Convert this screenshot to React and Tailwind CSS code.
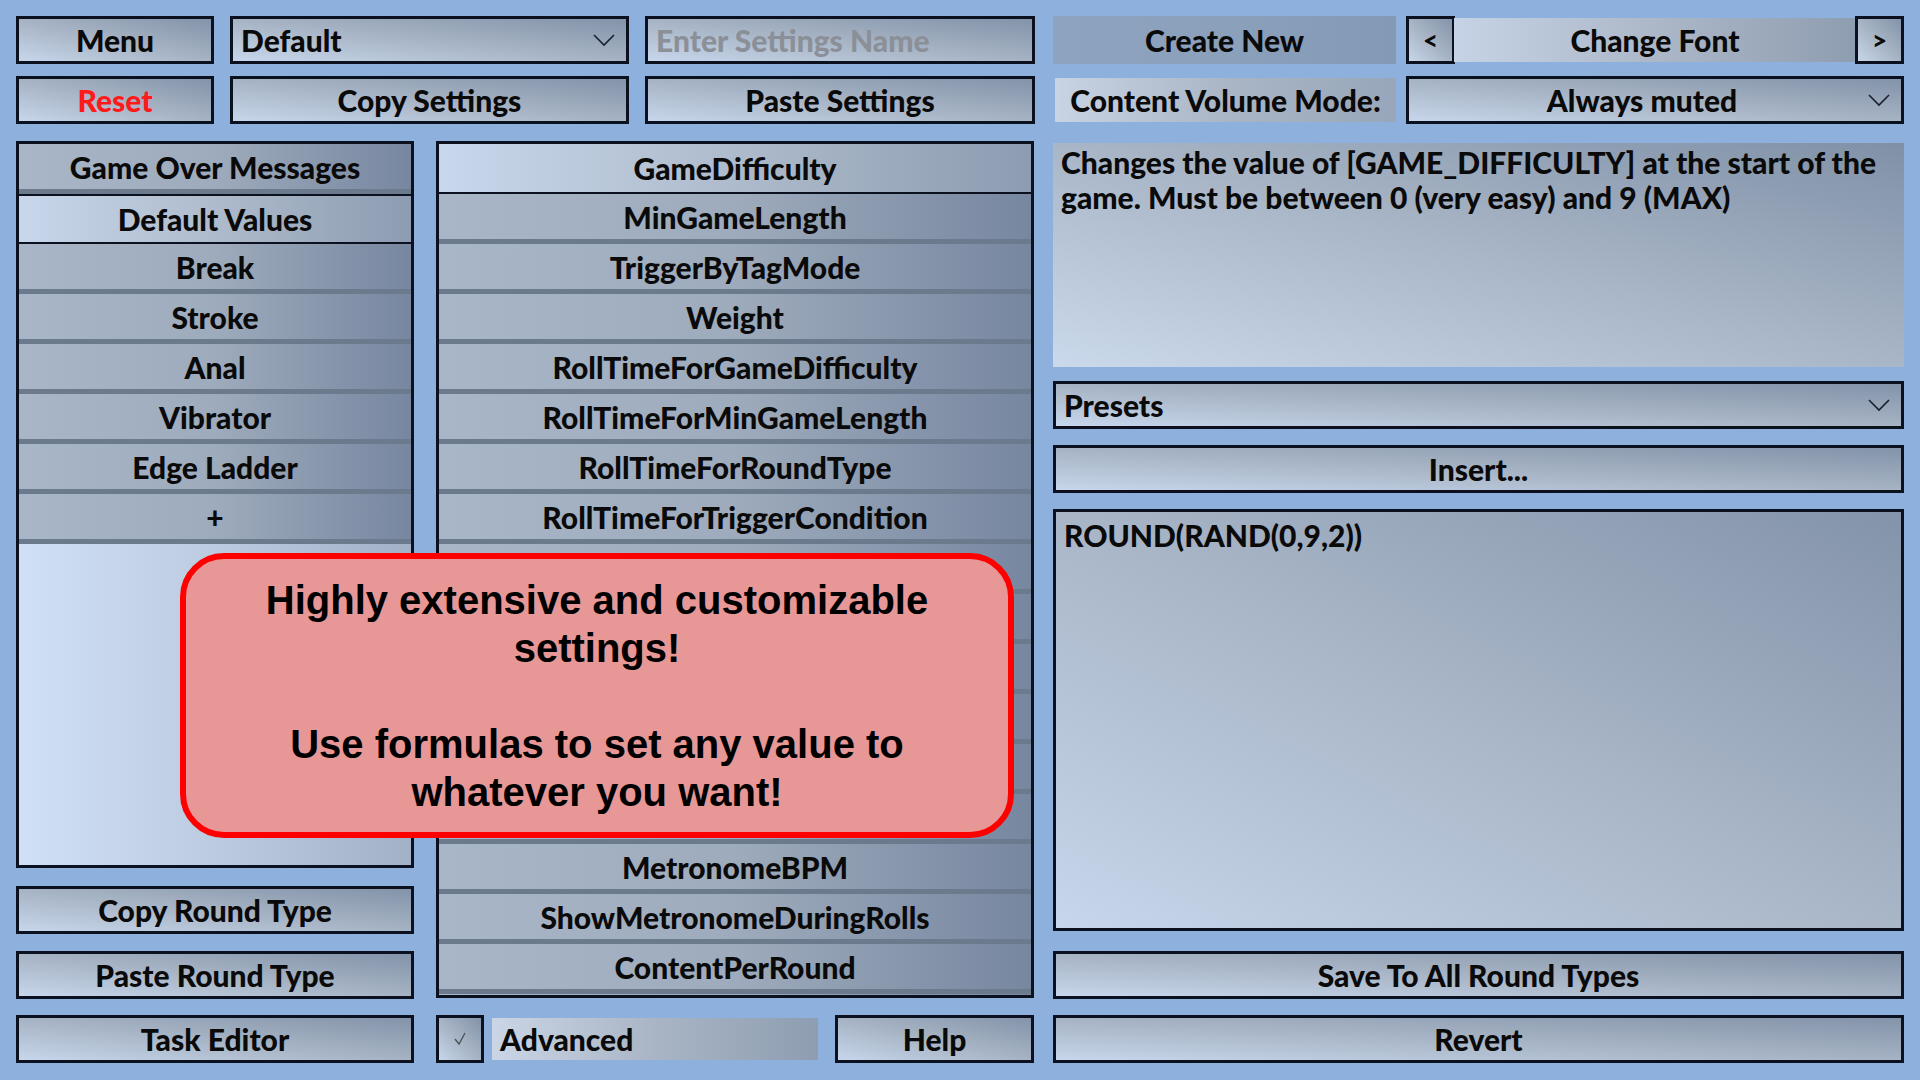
import React from 'react';

const roundTypes = ['Game Over Messages', 'Default Values', 'Break', 'Stroke', 'Anal', 'Vibrator', 'Edge Ladder', '+'];

// rows 8-13 and the last one sit under the callout, so they carry no label here
const settings = [
  'GameDifficulty', 'MinGameLength', 'TriggerByTagMode', 'Weight',
  'RollTimeForGameDifficulty', 'RollTimeForMinGameLength', 'RollTimeForRoundType', 'RollTimeForTriggerCondition',
  '', '', '', '', '', '',
  'MetronomeBPM', 'ShowMetronomeDuringRolls', 'ContentPerRound', '',
];

// shared look of the framed buttons
const frame = "border-[3px] border-[#0c1120] bg-linear-to-tr from-[#c7d6eb] via-[#a6b3c4] to-[#8393a9]";

function Btn({ children, className = '' }) {
  return (
    <div className={`${frame} flex items-center justify-center ${className}`}>
      {children}
    </div>
  );
}

function Chevron() {
  return (
    <svg width="24" height="14" viewBox="0 0 24 14" className="shrink-0">
      <polyline points="2,2 12,12 22,2" fill="none" stroke="#1a2030" strokeWidth="1.6" />
    </svg>
  );
}

function Dropdown({ label, center, className = '' }) {
  return (
    <div className={`${frame} flex items-center pl-2 pr-[10px] ${className}`}>
      <span className={`flex-1 ${center ? 'text-center' : ''}`}>{label}</span>
      <Chevron />
    </div>
  );
}

function ListRow({ label, selected, first }) {
  if (selected) {
    return (
      <div className={`h-[50px] shrink-0 flex items-center justify-center bg-linear-to-r from-[#c8d7ec] via-[#aebbcc] to-[#8d9cb1] border-b-2 border-[#0c1120] ${first ? '' : 'border-t-2'}`}>
        {label}
      </div>
    );
  }
  return (
    <div className="h-[50px] shrink-0 flex items-center justify-center bg-linear-to-r from-[#a9b6c7] via-[#9eabbc] to-[#7787a0] border-b-[5px] border-[#6c7a8d]">
      {label}
    </div>
  );
}

export default function App() {
  return (
    <div className="relative w-[1920px] h-[1080px] overflow-hidden bg-[#8db0dc] p-4 text-[30px] font-black text-[#0a0a0a] font-['Lato',sans-serif] leading-none">

      {/* top toolbar, two rows */}
      <div className="flex flex-col gap-3">
        <div className="flex h-[48px]">
          <Btn className="w-[198px]">Menu</Btn>
          <Dropdown label="Default" className="w-[399px] ml-4" />
          <div className={`${frame} w-[390px] ml-4 flex items-center px-2 text-[#8b9098]`}>Enter Settings Name</div>
          <div className="ml-[18px] w-[851px] flex">
            <div className="w-[343px] flex items-center justify-center bg-linear-to-r from-[#8ea3bf] via-[#8aa0bb] to-[#8399b6]">Create New</div>
            <Btn className="w-[49px] ml-[10px] text-[26px]">&lt;</Btn>
            <div className="w-[402px] -mx-px my-[2px] flex items-center justify-center bg-linear-to-r from-[#c6d3e6] via-[#acb8c8] to-[#8f9db1]">Change Font</div>
            <Btn className="w-[49px] text-[26px]">&gt;</Btn>
          </div>
        </div>
        <div className="flex h-[48px]">
          <Btn className="w-[198px] text-[#ff1a1a]">Reset</Btn>
          <Btn className="w-[399px] ml-4">Copy Settings</Btn>
          <Btn className="w-[390px] ml-4">Paste Settings</Btn>
          <div className="ml-[18px] w-[851px] flex">
            <div className="w-[341px] ml-[2px] my-[2px] flex items-center justify-center bg-linear-to-r from-[#c8d4e4] via-[#aab6c6] to-[#97a6ba]">Content Volume Mode:</div>
            <Dropdown label="Always muted" center className="w-[498px] ml-[10px]" />
          </div>
        </div>
      </div>

      {/* main area */}
      <div className="flex mt-[17px] h-[922px]">

        {/* round types */}
        <div className="w-[398px] flex flex-col">
          <div className="h-[727px] border-[3px] border-[#0c1120] flex flex-col overflow-hidden">
            {roundTypes.map((r, i) => (
              <ListRow key={r} label={r} selected={i === 1} />
            ))}
            <div className="flex-1 bg-linear-to-r from-[#d0e0f6] via-[#bccbe0] to-[#a2b1c6]" />
          </div>
          <Btn className="h-[48px] mt-[18px]">Copy Round Type</Btn>
          <Btn className="h-[48px] mt-[17px]">Paste Round Type</Btn>
          <Btn className="h-[48px] mt-4">Task Editor</Btn>
        </div>

        {/* settings of the selected round type */}
        <div className="w-[598px] ml-[22px] flex flex-col">
          <div className="h-[857px] border-[3px] border-[#0c1120] flex flex-col overflow-hidden bg-[#c0cddd]">
            {settings.map((s, i) => (
              <ListRow key={i} label={s} selected={i === 0} first />
            ))}
          </div>
          <div className="h-[48px] mt-[17px] flex items-center">
            <div className={`${frame} w-[48px] h-[48px] flex items-center justify-center`}>
              <svg width="14" height="14" viewBox="0 0 14 14">
                <polyline points="2,7 6,12 12,1" fill="none" stroke="#4a4f58" strokeWidth="1.3" />
              </svg>
            </div>
            <div className="w-[326px] h-[42px] ml-2 flex items-center px-2 bg-linear-to-r from-[#cad6e5] via-[#a9b5c5] to-[#8e9db1]">Advanced</div>
            <Btn className="w-[199px] h-[48px] ml-[17px]">Help</Btn>
          </div>
        </div>

        {/* description and value editor */}
        <div className="w-[851px] ml-[19px] flex flex-col">
          <div className="h-[224px] mt-[2px] px-2 pt-[2px] bg-linear-to-tr from-[#cbd9ec] via-[#a9b6c7] to-[#8091a7] leading-[35px]">
            Changes the value of [GAME_DIFFICULTY] at the start of the game. Must be between 0 (very easy) and 9 (MAX)
          </div>
          <Dropdown label="Presets" className="h-[48px] mt-[14px]" />
          <Btn className="h-[48px] mt-4">Insert...</Btn>
          <div className={`${frame} h-[422px] mt-4 px-2 pt-2 bg-linear-to-r from-[#c6d5ea] via-[#a9b6c8] to-[#8b9ab0]`}>
            ROUND(RAND(0,9,2))
          </div>
          <Btn className="h-[48px] mt-5">Save To All Round Types</Btn>
          <Btn className="h-[48px] mt-4">Revert</Btn>
        </div>
      </div>

      {/* promo callout */}
      <div className="absolute left-[180px] top-[553px] w-[834px] h-[285px] rounded-[44px] border-[6px] border-[#ff0000] bg-[#e89797] flex items-center justify-center text-center font-['Liberation_Sans',Arial,sans-serif] font-bold text-[40px] leading-[48px] text-black">
        <div>
          Highly extensive and customizable<br />
          settings!<br />
          <br />
          Use formulas to set any value to<br />
          whatever you want!
        </div>
      </div>
    </div>
  );
}
